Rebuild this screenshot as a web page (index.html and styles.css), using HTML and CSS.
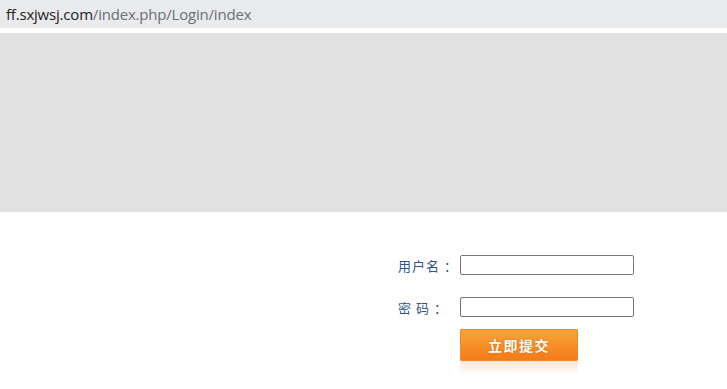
FILE: index.html
```html
<!DOCTYPE html>
<html lang="zh">
<head>
<meta charset="utf-8">
<title>Login</title>
<link rel="stylesheet" href="styles.css">
</head>
<body>
<div class="urlbar"><span class="host">ff.sxjwsj.com</span><span class="path">/index.php/Login/index</span></div>
<div class="banner"></div>
<form class="login">
  <div class="row">
    <label class="lbl">用户名<span class="colon">：</span></label>
    <input class="field" type="text">
  </div>
  <div class="row row2">
    <label class="lbl">密 码<span class="colon">：</span></label>
    <input class="field" type="password">
  </div>
  <div class="row row3">
    <span class="lbl"></span>
    <div class="btnwrap">
      <button class="btn" type="button">立即提交</button>
      <div class="reflect"></div>
    </div>
  </div>
</form>
</body>
</html>
```
FILE: styles.css
```css
html, body { margin: 0; padding: 0; background: #fff; }
body { width: 727px; height: 389px; overflow: hidden; }
.urlbar {
  height: 28px;
  background: #e9eaec;
  font-family: "Open Sans", "Noto Sans", sans-serif;
  font-size: 15px;
  line-height: 28px;
  padding-left: 6px;
  letter-spacing: -0.2px;
}
.host { color: #222; }
.path { color: #6b6f76; }
.banner {
  margin-top: 5px;
  height: 179px;
  background: #e2e2e2;
}
.login {
  padding-top: 43px;
  padding-left: 398px;
  font-family: "Noto Sans CJK SC", "Noto Sans", sans-serif;
}
.row { display: flex; align-items: center; height: 20px; }
.row2 { margin-top: 22px; }
.row3 { margin-top: 12px; height: auto; align-items: flex-start; }
.lbl {
  width: 62px;
  font-size: 13px;
  color: #2f5491;
  letter-spacing: 1px;
  white-space: nowrap;
}
.colon { padding-left: 4px; }
.field {
  box-sizing: border-box;
  width: 174px;
  height: 20px;
  margin: 0;
  border: 1px solid #767676;
  border-radius: 2px;
  background: #fff;
  padding: 0 3px;
}
.btnwrap { display: flex; flex-direction: column; width: 118px; }
.btn {
  box-sizing: border-box;
  width: 118px;
  height: 32px;
  margin: 0;
  border: 1px solid #ef8a2a;
  border-radius: 1px;
  background: linear-gradient(#f8a537, #f57b17);
  color: #fff;
  font-family: "Noto Sans CJK SC", sans-serif;
  font-size: 14px;
  font-weight: bold;
  letter-spacing: 1.5px;
  text-shadow: 0 0 2px rgba(160,70,0,0.6);
  padding: 0;
}
.reflect {
  height: 14px;
  background: linear-gradient(rgba(245,140,50,0.22), rgba(255,255,255,0));
}
```
